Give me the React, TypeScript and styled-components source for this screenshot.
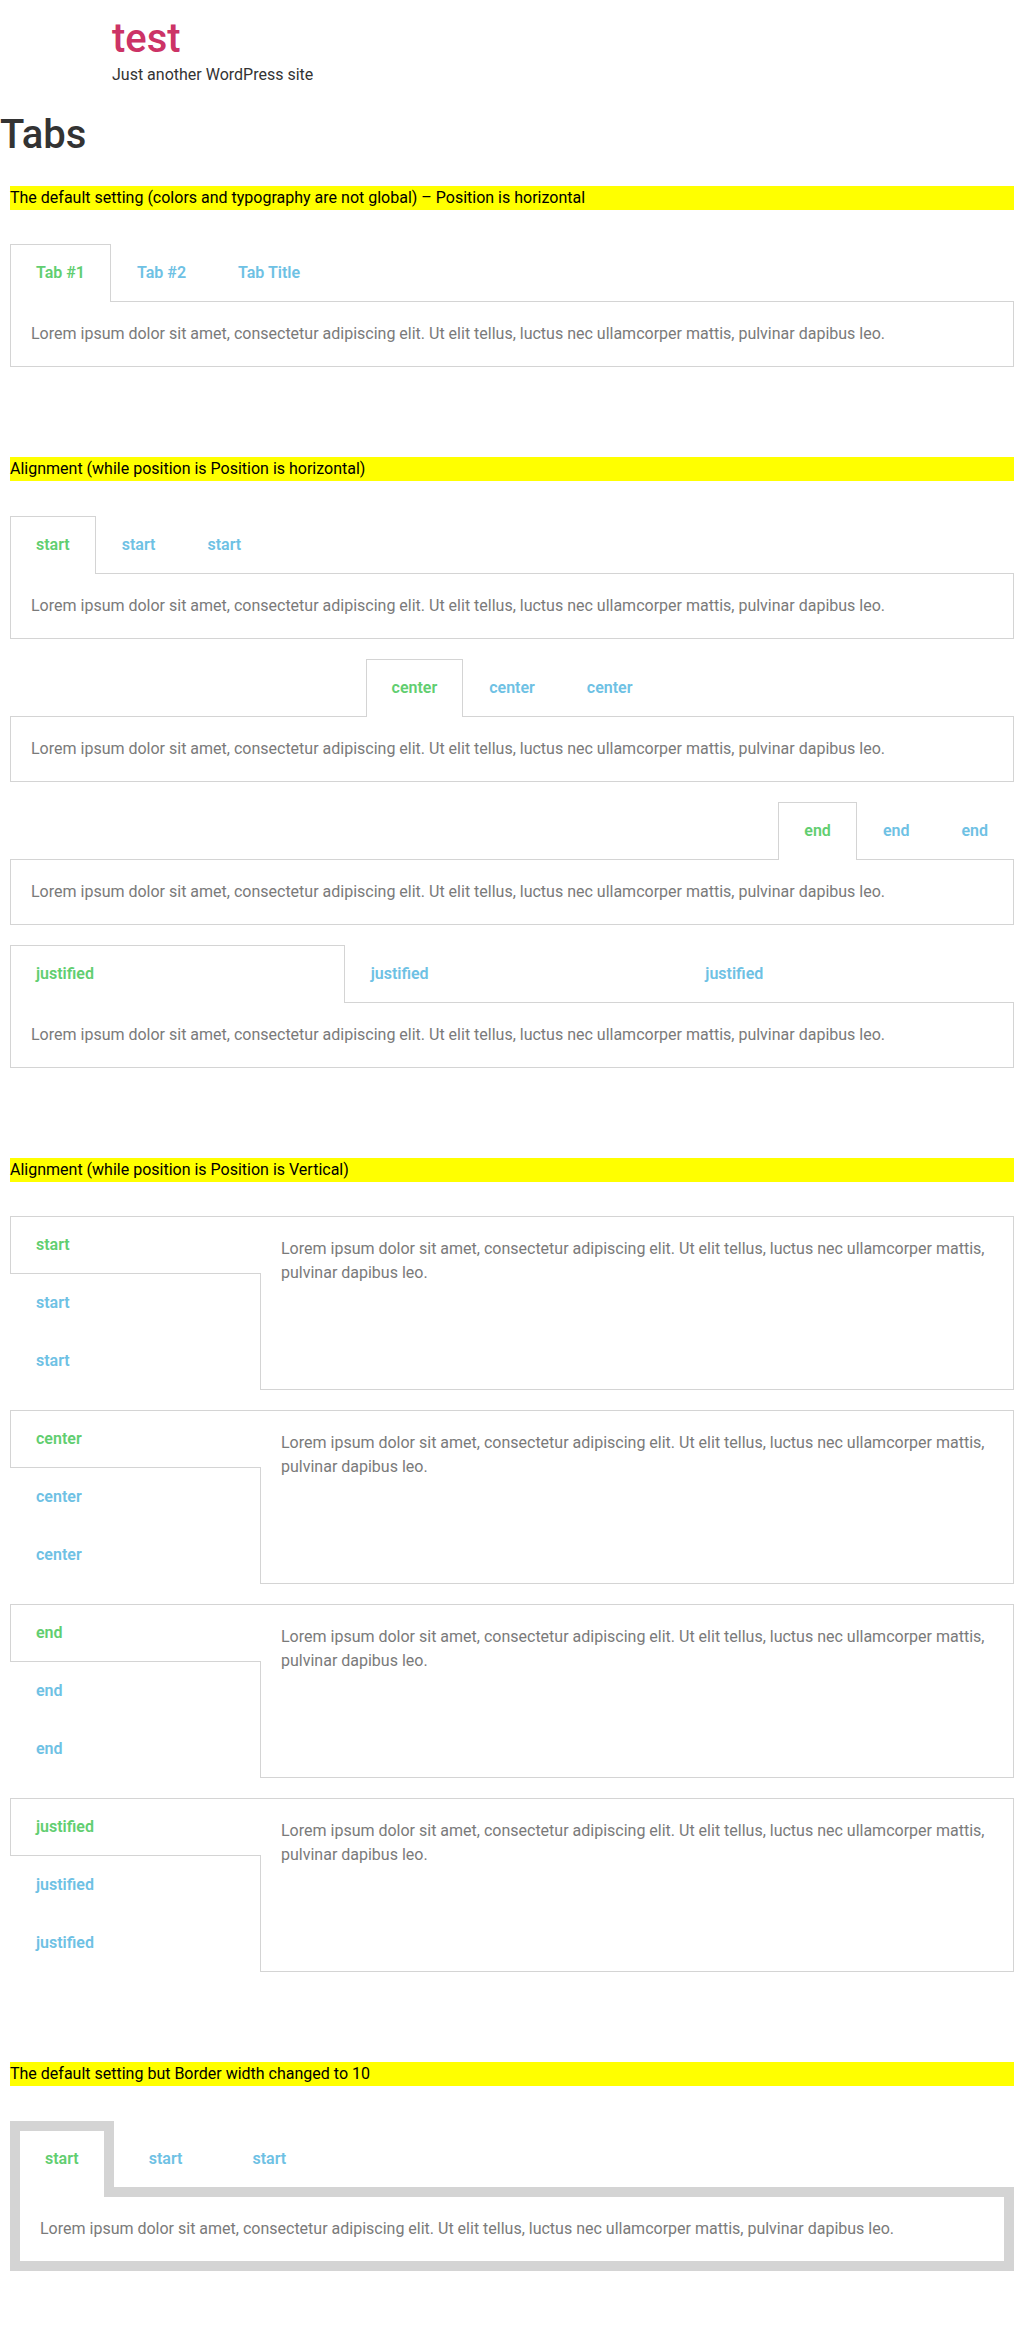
import React from 'react';
import styled, { createGlobalStyle, css } from 'styled-components';

const BORDER = '#d4d4d4';
const LOREM =
  'Lorem ipsum dolor sit amet, consectetur adipiscing elit. Ut elit tellus, luctus nec ullamcorper mattis, pulvinar dapibus leo.';

const GlobalStyle = createGlobalStyle`
  html, body { margin: 0; padding: 0; background: #fff; }
  body {
    font-family: Roboto, "Liberation Sans", Arial, sans-serif;
    color: #333;
    font-size: 16px;
    line-height: 1.5;
  }
  *, *::before, *::after { box-sizing: border-box; }
`;

const Header = styled.header`
  max-width: 800px;
  margin: 0 auto;
  padding: 15px 0 0;
`;

const SiteTitle = styled.div`
  font-size: 40px;
  line-height: 1.2;
  font-weight: 500;
  color: #cc3366;
`;

const Tagline = styled.p`
  margin: 0;
  font-size: 16px;
  line-height: 1.5;
  color: #333;
`;

const PageTitle = styled.h1`
  margin: 24px 0 0;
  font-size: 40px;
  font-weight: 500;
  line-height: 1.2;
  color: #333;
`;

const Section = styled.section<{ $top: number }>`
  padding: 0 10px;
  margin-top: ${(p) => p.$top}px;
`;

const Note = styled.p`
  margin: 0 0 34.4px;
  background: #ffff00;
  color: #000;
  font-size: 16px;
  line-height: 1.5;
`;

const Stack = styled.div`
  display: flex;
  flex-direction: column;
  gap: 20px;
`;

/* ---------- horizontal tabs ---------- */

const HWrap = styled.div`
  display: flex;
  flex-direction: column;
`;

const HTabBar = styled.div`
  display: flex;
  align-items: stretch;
`;

const TabLabel = css<{ $active: boolean }>`
  font-size: 16px;
  font-weight: 600;
  line-height: 1;
  white-space: nowrap;
  cursor: pointer;
  color: ${(p) => (p.$active ? '#61ce70' : '#6ec1e4')};
`;

const HTab = styled.div<{ $active: boolean; $bw: number; $grow: boolean }>`
  ${TabLabel};
  flex: ${(p) => (p.$grow ? '1 1 0' : '0 0 auto')};
  ${(p) =>
    p.$active
      ? css`
          border: ${p.$bw}px solid ${BORDER};
          border-bottom: none;
          padding: 20px 25px ${20 + p.$bw}px;
        `
      : css`
          border-bottom: ${p.$bw}px solid ${BORDER};
          padding: ${20 + p.$bw}px ${25 + p.$bw}px 20px;
        `}
`;

const HFiller = styled.div<{ $bw: number }>`
  flex: 1 1 0;
  border-bottom: ${(p) => p.$bw}px solid ${BORDER};
`;

const HContent = styled.div<{ $bw: number }>`
  border: ${(p) => p.$bw}px solid ${BORDER};
  border-top: none;
  padding: 20px;
  color: #7a7a7a;
  font-size: 16px;
  line-height: 1.5;
`;

/* ---------- vertical tabs ---------- */

const VWrap = styled.div`
  display: flex;
  align-items: stretch;
`;

const VTabList = styled.div`
  flex: 0 0 25%;
  display: flex;
  flex-direction: column;
`;

const VTab = styled.div<{ $active: boolean; $bw: number }>`
  ${TabLabel};
  ${(p) =>
    p.$active
      ? css`
          border: ${p.$bw}px solid ${BORDER};
          border-right: none;
          padding: 20px ${25 + p.$bw}px 20px 25px;
        `
      : css`
          border-right: ${p.$bw}px solid ${BORDER};
          padding: ${20 + p.$bw}px 25px ${20 + p.$bw}px ${25 + p.$bw}px;
        `}
`;

const VFiller = styled.div<{ $bw: number }>`
  flex: 1 1 auto;
  border-right: ${(p) => p.$bw}px solid ${BORDER};
`;

const VContent = styled.div<{ $bw: number }>`
  flex: 1 1 auto;
  border: ${(p) => p.$bw}px solid ${BORDER};
  border-left: none;
  padding: 20px;
  color: #7a7a7a;
  font-size: 16px;
  line-height: 1.5;
`;

type Align = 'start' | 'center' | 'end' | 'justified';

interface TabsProps {
  labels: string[];
  align?: Align;
  vertical?: boolean;
  bw?: number;
}

function Tabs({ labels, align = 'start', vertical = false, bw = 1 }: TabsProps) {
  if (vertical) {
    return (
      <VWrap>
        <VTabList>
          {labels.map((l, i) => (
            <VTab key={i} $active={i === 0} $bw={bw}>
              {l}
            </VTab>
          ))}
          <VFiller $bw={bw} />
        </VTabList>
        <VContent $bw={bw}>{LOREM}</VContent>
      </VWrap>
    );
  }
  const leadFill = align === 'center' || align === 'end';
  const tailFill = align === 'center' || align === 'start';
  return (
    <HWrap>
      <HTabBar>
        {leadFill && <HFiller $bw={bw} />}
        {labels.map((l, i) => (
          <HTab key={i} $active={i === 0} $bw={bw} $grow={align === 'justified'}>
            {l}
          </HTab>
        ))}
        {tailFill && <HFiller $bw={bw} />}
      </HTabBar>
      <HContent $bw={bw}>{LOREM}</HContent>
    </HWrap>
  );
}

const three = (s: string) => [s, s, s];

export default function App() {
  return (
    <>
      <GlobalStyle />
      <Header>
        <SiteTitle>test</SiteTitle>
        <Tagline>Just another WordPress site</Tagline>
      </Header>
      <PageTitle>Tabs</PageTitle>

      <Section $top={27}>
        <Note>The default setting (colors and typography are not global) – Position is horizontal</Note>
        <Tabs labels={['Tab #1', 'Tab #2', 'Tab Title']} />
      </Section>

      <Section $top={90}>
        <Note>Alignment (while position is Position is horizontal)</Note>
        <Stack>
          <Tabs labels={three('start')} align="start" />
          <Tabs labels={three('center')} align="center" />
          <Tabs labels={three('end')} align="end" />
          <Tabs labels={three('justified')} align="justified" />
        </Stack>
      </Section>

      <Section $top={90}>
        <Note>Alignment (while position is Position is Vertical)</Note>
        <Stack>
          <Tabs labels={three('start')} vertical />
          <Tabs labels={three('center')} vertical />
          <Tabs labels={three('end')} vertical />
          <Tabs labels={three('justified')} vertical />
        </Stack>
      </Section>

      <Section $top={90}>
        <Note>The default setting but Border width changed to 10</Note>
        <Tabs labels={three('start')} bw={10} />
      </Section>
    </>
  );
}
